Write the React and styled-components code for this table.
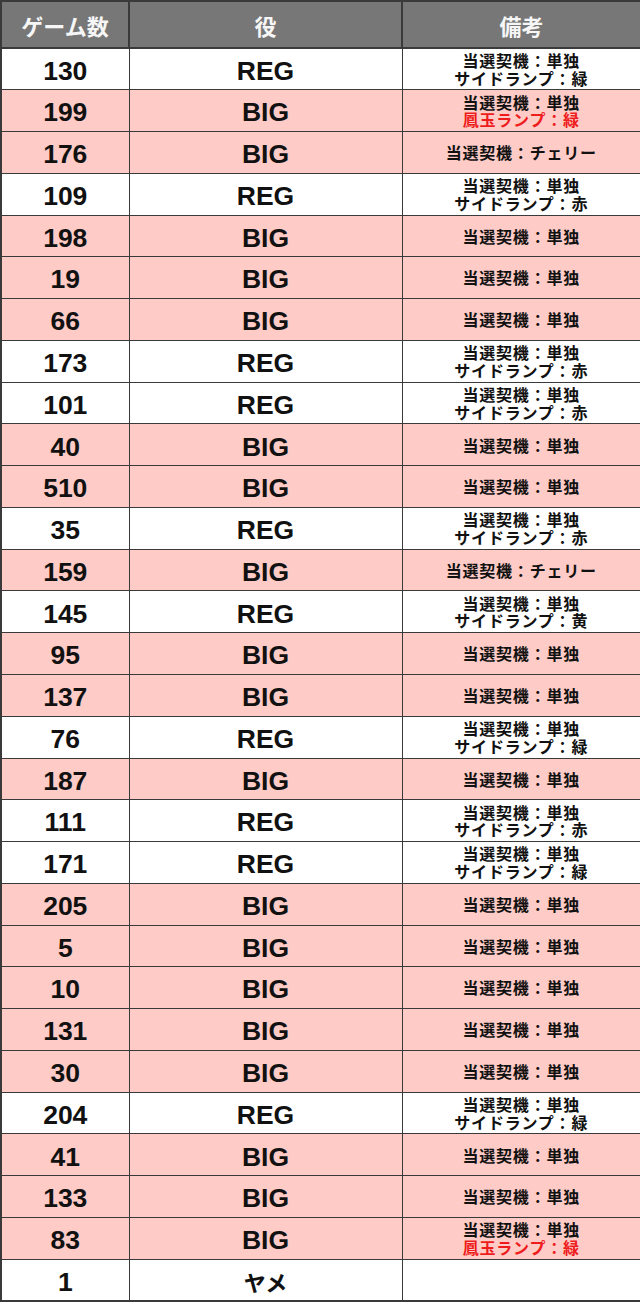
import React from 'react'
import styled, { createGlobalStyle } from 'styled-components'

const Global = createGlobalStyle`
  html, body {
    margin: 0;
    padding: 0;
    background: #fff;
  }
`

const rows = [
  [130, 'REG', 'side', '緑'],
  [199, 'BIG', 'red'],
  [176, 'BIG', 'cherry'],
  [109, 'REG', 'side', '赤'],
  [198, 'BIG', 'single'],
  [19, 'BIG', 'single'],
  [66, 'BIG', 'single'],
  [173, 'REG', 'side', '赤'],
  [101, 'REG', 'side', '赤'],
  [40, 'BIG', 'single'],
  [510, 'BIG', 'single'],
  [35, 'REG', 'side', '赤'],
  [159, 'BIG', 'cherry'],
  [145, 'REG', 'side', '黄'],
  [95, 'BIG', 'single'],
  [137, 'BIG', 'single'],
  [76, 'REG', 'side', '緑'],
  [187, 'BIG', 'single'],
  [111, 'REG', 'side', '赤'],
  [171, 'REG', 'side', '緑'],
  [205, 'BIG', 'single'],
  [5, 'BIG', 'single'],
  [10, 'BIG', 'single'],
  [131, 'BIG', 'single'],
  [30, 'BIG', 'single'],
  [204, 'REG', 'side', '緑'],
  [41, 'BIG', 'single'],
  [133, 'BIG', 'single'],
  [83, 'BIG', 'red'],
  [1, 'ヤメ', 'none'],
]

const Table = styled.table`
  width: 640px;
  border-collapse: collapse;
  table-layout: fixed;
  border: 2px solid #3a3a3a;
  font-family: "Liberation Sans", "Noto Sans CJK JP", sans-serif;
`

const HeadRow = styled.tr`
  height: 47px;
`

const Head = styled.th`
  background: #777777;
  color: #f6f6f6;
  font-family: "Noto Sans CJK JP", sans-serif;
  font-size: 22px;
  font-weight: 700;
  border: 2px solid #3a3a3a;
  padding: 0;
  text-align: center;
  vertical-align: middle;
`

const Row = styled.tr`
  height: 41.77px;
  background: ${p => (p.$pink ? '#fecbc6' : '#ffffff')};
`

const Cell = styled.td`
  padding: 4px 0 0;
  border: 1.5px solid #3a3a3a;
  text-align: center;
  vertical-align: middle;
  color: #111;
  font-size: 26.5px;
  font-weight: 700;
  line-height: 1;
`

const Kana = styled.span`
  font-family: "Noto Sans CJK JP", sans-serif;
  font-size: 22px;
`

const Note = styled.td`
  padding: 1px 0 0;
  border: 1.5px solid #3a3a3a;
  text-align: center;
  vertical-align: middle;
  font-family: "Noto Sans CJK JP", sans-serif;
  font-size: 16px;
  letter-spacing: 0.8px;
  font-weight: 700;
  line-height: 17.5px;
  color: #111;
`

const Line = styled.div`
  color: ${p => (p.$red ? '#ee1c1c' : '#111')};
  white-space: nowrap;
`

const NoteBody = ({ kind, color }) => {
  if (kind === 'none') return null
  if (kind === 'cherry') return <Line>当選契機：チェリー</Line>
  return (
    <>
      <Line>当選契機：単独</Line>
      {kind === 'side' && <Line>サイドランプ：{color}</Line>}
      {kind === 'red' && <Line $red>鳳玉ランプ：緑</Line>}
    </>
  )
}

const App = () => (
  <>
    <Global />
    <Table>
      <colgroup>
        <col style={{ width: '128px' }} />
        <col style={{ width: '273px' }} />
        <col style={{ width: '239px' }} />
      </colgroup>
      <thead>
        <HeadRow>
          <Head>ゲーム数</Head>
          <Head>役</Head>
          <Head>備考</Head>
        </HeadRow>
      </thead>
      <tbody>
        {rows.map(([game, role, kind, color], i) => (
          <Row key={i} $pink={role === 'BIG'}>
            <Cell>{game}</Cell>
            <Cell>{role === 'ヤメ' ? <Kana>{role}</Kana> : role}</Cell>
            <Note>
              <NoteBody kind={kind} color={color} />
            </Note>
          </Row>
        ))}
      </tbody>
    </Table>
  </>
)

export default App
